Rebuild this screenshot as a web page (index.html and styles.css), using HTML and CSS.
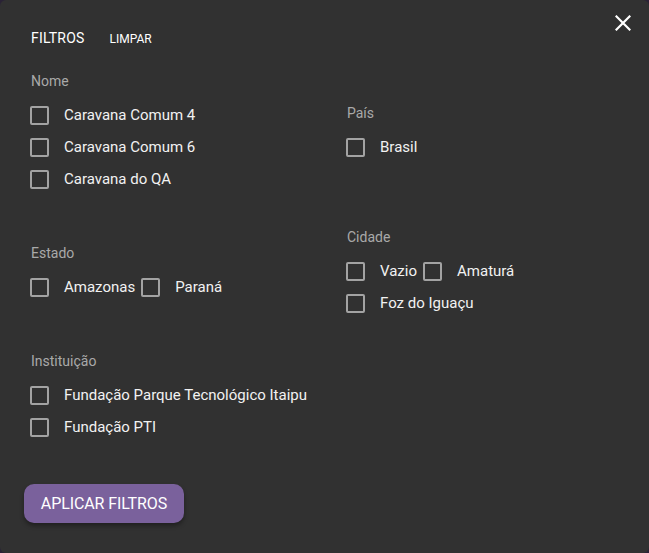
FILE: index.html
```html
<!DOCTYPE html>
<html lang="pt">
<head>
<meta charset="utf-8">
<link rel="stylesheet" href="styles.css">
</head>
<body>
<div class="dialog">
  <header class="head">
    <span class="title">FILTROS</span>
    <button class="clear">LIMPAR</button>
    <button class="close" aria-label="Fechar">
      <svg width="16" height="16" viewBox="0 0 16 16"><path d="M1.5 1.5L14.5 14.5M14.5 1.5L1.5 14.5" stroke="#fff" stroke-width="2.2" stroke-linecap="square"/></svg>
    </button>
  </header>
  <div class="grid">
    <section class="group">
      <div class="label">Nome</div>
      <label class="opt"><span class="box"></span><span>Caravana Comum 4</span></label>
      <label class="opt"><span class="box"></span><span>Caravana Comum 6</span></label>
      <label class="opt"><span class="box"></span><span>Caravana do QA</span></label>
    </section>
    <section class="group">
      <div class="label">País</div>
      <label class="opt"><span class="box"></span><span>Brasil</span></label>
    </section>
    <section class="group">
      <div class="label">Estado</div>
      <div class="inline">
        <label class="opt"><span class="box"></span><span>Amazonas</span></label>
        <label class="opt"><span class="box"></span><span>Paraná</span></label>
      </div>
    </section>
    <section class="group">
      <div class="label">Cidade</div>
      <div class="inline">
        <label class="opt"><span class="box"></span><span>Vazio</span></label>
        <label class="opt"><span class="box"></span><span>Amaturá</span></label>
      </div>
      <label class="opt"><span class="box"></span><span>Foz do Iguaçu</span></label>
    </section>
    <section class="group">
      <div class="label">Instituição</div>
      <label class="opt"><span class="box"></span><span>Fundação Parque Tecnológico Itaipu</span></label>
      <label class="opt"><span class="box"></span><span>Fundação PTI</span></label>
    </section>
  </div>
  <div class="actions">
    <button class="apply">APLICAR FILTROS</button>
  </div>
</div>
</body>
</html>
```

FILE: styles.css
```css
* { box-sizing: border-box; }
html, body { margin: 0; padding: 0; }
body {
  background: #2a2236;
  width: 649px;
  height: 553px;
  font-family: Roboto, "Liberation Sans", sans-serif;
  overflow: hidden;
}
.dialog {
  width: 649px;
  height: 553px;
  background: #313131;
  border-radius: 6px;
  padding: 0 0 0 30px;
}
.head {
  display: flex;
  align-items: center;
  height: 76px;
}
.title {
  color: #fff;
  font-size: 14px;
  margin-left: 1px;
  letter-spacing: 0.2px;
}
.clear {
  background: none;
  border: 0;
  color: #fff;
  font-family: inherit;
  font-size: 12px;
  font-weight: 400;
  padding: 0;
  margin-left: 25px;
  margin-top: 1px;
}
.close {
  background: none;
  border: 0;
  padding: 0;
  width: 16px;
  height: 16px;
  margin-left: auto;
  margin-right: 18px;
  align-self: flex-start;
  margin-top: 15px;
  display: flex;
}
.grid {
  display: grid;
  grid-template-columns: 316px 1fr;
  row-gap: 32px;
  align-items: center;
  margin-top: -5px;
}
.group {
  display: flex;
  flex-direction: column;
}
.label {
  color: #a9a9a9;
  font-size: 14px;
  line-height: 20px;
  margin-left: 1px;
  margin-bottom: 8px;
}
.inline {
  display: flex;
}
.opt {
  display: flex;
  align-items: center;
  height: 32px;
  color: #f2f2f2;
  font-size: 15px;
  margin-right: 6px;
}
.box {
  width: 19px;
  height: 19px;
  border: 2px solid #a3a3a3;
  border-radius: 2px;
  margin-right: 15px;
  flex: none;
}
.actions {
  margin-top: 41px;
  margin-left: -6px;
}
.apply {
  width: 160px;
  height: 39px;
  border: 0;
  border-radius: 10px;
  background: #7a619c;
  color: #fff;
  font-family: inherit;
  font-size: 16px;
  letter-spacing: -0.1px;
  box-shadow: 0 3px 4px rgba(0,0,0,0.35);
}
```
